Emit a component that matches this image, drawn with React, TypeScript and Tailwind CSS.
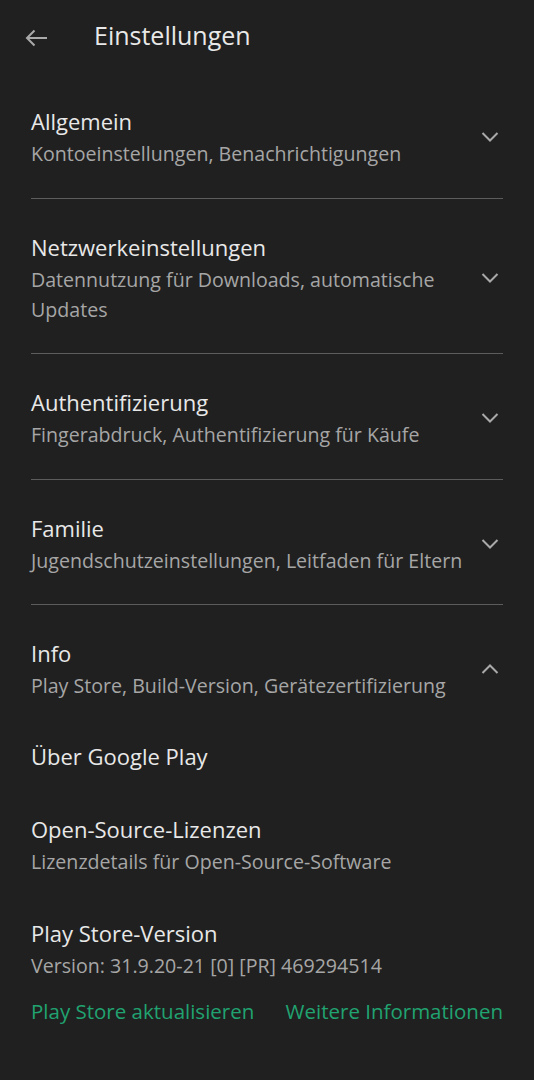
import React from "react";

const font = { fontFamily: "'Open Sans', Roboto, sans-serif" };

const Chevron = ({ up }: { up?: boolean }) => (
  <svg width="18" height="10" viewBox="0 0 18 10" className="shrink-0">
    <path
      d={up ? "M1.5 9 L9 1.5 L16.5 9" : "M1.5 1 L9 8.5 L16.5 1"}
      fill="none"
      stroke="#a9a9a9"
      strokeWidth="2"
    />
  </svg>
);

interface SectionProps {
  title: string;
  subtitle: string;
  open?: boolean;
  last?: boolean;
}

const Section = ({ title, subtitle, open, last }: SectionProps) => (
  <div className={last ? "pt-[32px]" : "pt-[32px] pb-[28.5px] border-b border-[#5c5c5c]"}>
    <div className="flex items-center justify-between gap-2">
      <div className="flex flex-col min-w-0">
        <span className="text-[22px] leading-[32px] text-[#e8e8e8]">{title}</span>
        <span className="mt-[2px] text-[19.6px] leading-[30px] text-[#a6a6a6]">{subtitle}</span>
      </div>
      <div className="pr-[4px]">
        <Chevron up={open} />
      </div>
    </div>
  </div>
);

const Item = ({ title, subtitle, top }: { title: string; subtitle?: string; top: string }) => (
  <div className={"flex flex-col " + top}>
    <span className="text-[22px] leading-[32px] text-[#e8e8e8]">{title}</span>
    {subtitle && (
      <span className="mt-[2px] text-[19.6px] leading-[30px] text-[#a6a6a6]">{subtitle}</span>
    )}
  </div>
);

export default function App() {
  return (
    <div className="w-[534px] h-[1080px] bg-[#202020] overflow-hidden" style={font}>
      <div className="h-[73px] flex items-center pb-[1px]">
        <div className="w-[94px] flex items-center pl-[23px] pt-[3px]">
          <svg width="26" height="24" viewBox="0 0 26 24">
            <path
              d="M24 12 H4.5 M11.5 4.5 L4 12 L11.5 19.5"
              fill="none"
              stroke="#a9a9a9"
              strokeWidth="2"
            />
          </svg>
        </div>
        <span className="text-[25px] text-[#e8e8e8]">Einstellungen</span>
      </div>

      <div className="px-[31px]">
        <Section title="Allgemein" subtitle="Kontoeinstellungen, Benachrichtigungen" />
        <Section
          title="Netzwerkeinstellungen"
          subtitle="Datennutzung für Downloads, automatische Updates"
        />
        <Section
          title="Authentifizierung"
          subtitle="Fingerabdruck, Authentifizierung für Käufe"
        />
        <Section
          title="Familie"
          subtitle="Jugendschutzeinstellungen, Leitfaden für Eltern"
        />
        <Section
          title="Info"
          subtitle="Play Store, Build-Version, Gerätezertifizierung"
          open
          last
        />

        <Item top="pt-[39px]" title="Über Google Play" />
        <Item
          top="pt-[41px]"
          title="Open-Source-Lizenzen"
          subtitle="Lizenzdetails für Open-Source-Software"
        />
        <Item
          top="pt-[40px]"
          title="Play Store-Version"
          subtitle="Version: 31.9.20-21 [0] [PR] 469294514"
        />

        <div className="flex justify-between pt-[15px] text-[20.5px] leading-[30px] font-medium text-[#20a370]">
          <span>Play Store aktualisieren</span>
          <span>Weitere Informationen</span>
        </div>
      </div>
    </div>
  );
}
